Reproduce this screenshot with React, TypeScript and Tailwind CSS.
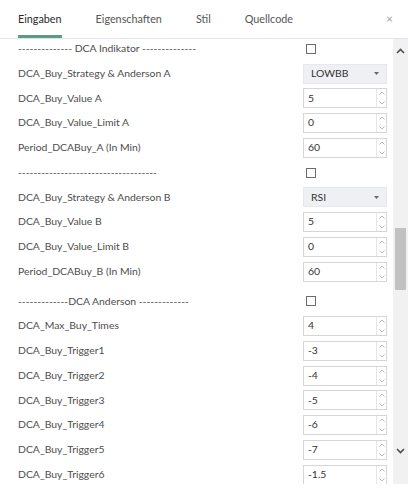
import React from 'react';

type Row =
  | { kind: 'check'; label: string; gap?: boolean }
  | { kind: 'select'; label: string; value: string }
  | { kind: 'num'; label: string; value: string };

const rows: Row[] = [
  { kind: 'check', label: '-------------- DCA Indikator --------------' },
  { kind: 'select', label: 'DCA_Buy_Strategy & Anderson A', value: 'LOWBB' },
  { kind: 'num', label: 'DCA_Buy_Value A', value: '5' },
  { kind: 'num', label: 'DCA_Buy_Value_Limit A', value: '0' },
  { kind: 'num', label: 'Period_DCABuy_A (In Min)', value: '60' },
  { kind: 'check', label: '------------------------------------' },
  { kind: 'select', label: 'DCA_Buy_Strategy & Anderson B', value: 'RSI' },
  { kind: 'num', label: 'DCA_Buy_Value B', value: '5' },
  { kind: 'num', label: 'DCA_Buy_Value_Limit B', value: '0' },
  { kind: 'num', label: 'Period_DCABuy_B (In Min)', value: '60' },
  { kind: 'check', label: '-------------DCA Anderson -------------', gap: true },
  { kind: 'num', label: 'DCA_Max_Buy_Times', value: '4' },
  { kind: 'num', label: 'DCA_Buy_Trigger1', value: '-3' },
  { kind: 'num', label: 'DCA_Buy_Trigger2', value: '-4' },
  { kind: 'num', label: 'DCA_Buy_Trigger3', value: '-5' },
  { kind: 'num', label: 'DCA_Buy_Trigger4', value: '-6' },
  { kind: 'num', label: 'DCA_Buy_Trigger5', value: '-7' },
  { kind: 'num', label: 'DCA_Buy_Trigger6', value: '-1.5' },
];

const tabs = ['Eingaben', 'Eigenschaften', 'Stil', 'Quellcode'];

const Spinner = () => (
  <div className="flex flex-col justify-between w-[10px] h-full border-l border-[#e6e6e6] py-[2px] items-center">
    <svg width="6" height="4" viewBox="0 0 6 4">
      <path d="M0.5 3.5 L3 1 L5.5 3.5" fill="none" stroke="#b8b8b8" strokeWidth="0.9" />
    </svg>
    <svg width="6" height="4" viewBox="0 0 6 4">
      <path d="M0.5 0.5 L3 3 L5.5 0.5" fill="none" stroke="#b8b8b8" strokeWidth="0.9" />
    </svg>
  </div>
);

const Control = ({ row }: { row: Row }) => {
  if (row.kind === 'check') {
    return <div className="ml-[3px] w-[10px] h-[10px] border border-[#6b6b6b] bg-white" />;
  }
  if (row.kind === 'select') {
    return (
      <div className="w-[84px] h-[20px] bg-[#eef0f3] border border-[#e6e8ec] flex items-center justify-between pl-[7px] pr-[7px] text-[#333]">
        <span>{row.value}</span>
        <svg width="5" height="3" viewBox="0 0 5 3">
          <path d="M0 0 H5 L2.5 3 Z" fill="#666" />
        </svg>
      </div>
    );
  }
  return (
    <div className="w-[84px] h-[20px] bg-white border border-[#d6d6d6] flex items-center justify-between pl-[4px] text-[#333]">
      <span>{row.value}</span>
      <Spinner />
    </div>
  );
};

export default function App() {
  return (
    <div className="w-[408px] h-[488px] bg-white font-['Lato',sans-serif] text-[10.4px] overflow-hidden">
      <div className="h-[39px] border-b border-[#e0e3eb] flex items-stretch relative">
        <div className="flex pl-[18px] gap-[34px]">
          {tabs.map((t, i) => (
            <div
              key={t}
              className={
                i === 0
                  ? 'flex items-center text-[10.8px] text-[#2a2a2a] border-b-[3px] border-[#5b9c85] pt-[3px]'
                  : 'flex items-center text-[10.8px] text-[#555]'
              }
            >
              {t}
            </div>
          ))}
        </div>
        <div className="ml-auto mr-[15px] flex items-center text-[#a0a0a0] text-[12px]">×</div>
      </div>
      <div className="h-[445px] flex overflow-hidden">
        <div className="flex-1 overflow-hidden pl-[18px]">
          <div className="mt-[-2.4px]">
            {rows.map((r, i) => (
              <div
                key={i}
                className={
                  'grid grid-cols-[285px_84px] items-center h-[24.75px] ' + (r.kind === 'check' && r.gap ? 'mt-[5px]' : '')
                }
              >
                <div className="text-[#4d4d4d] whitespace-nowrap">{r.label}</div>
                <Control row={r} />
              </div>
            ))}
          </div>
        </div>
        <div className="w-[15px] bg-[#f1f1f1] flex flex-col items-center">
          <div className="h-[24px] flex items-center">
            <svg width="9" height="6" viewBox="0 0 9 6">
              <path d="M1 5 L4.5 1.5 L8 5" fill="none" stroke="#505050" strokeWidth="1.6" />
            </svg>
          </div>
          <div className="h-[165px]" />
          <div className="w-[11px] h-[62px] bg-[#c1c1c1]" />
          <div className="flex-1" />
          <div className="h-[36px] flex items-start">
            <svg width="9" height="6" viewBox="0 0 9 6">
              <path d="M1 1 L4.5 4.5 L8 1" fill="none" stroke="#505050" strokeWidth="1.6" />
            </svg>
          </div>
        </div>
      </div>
    </div>
  );
}
